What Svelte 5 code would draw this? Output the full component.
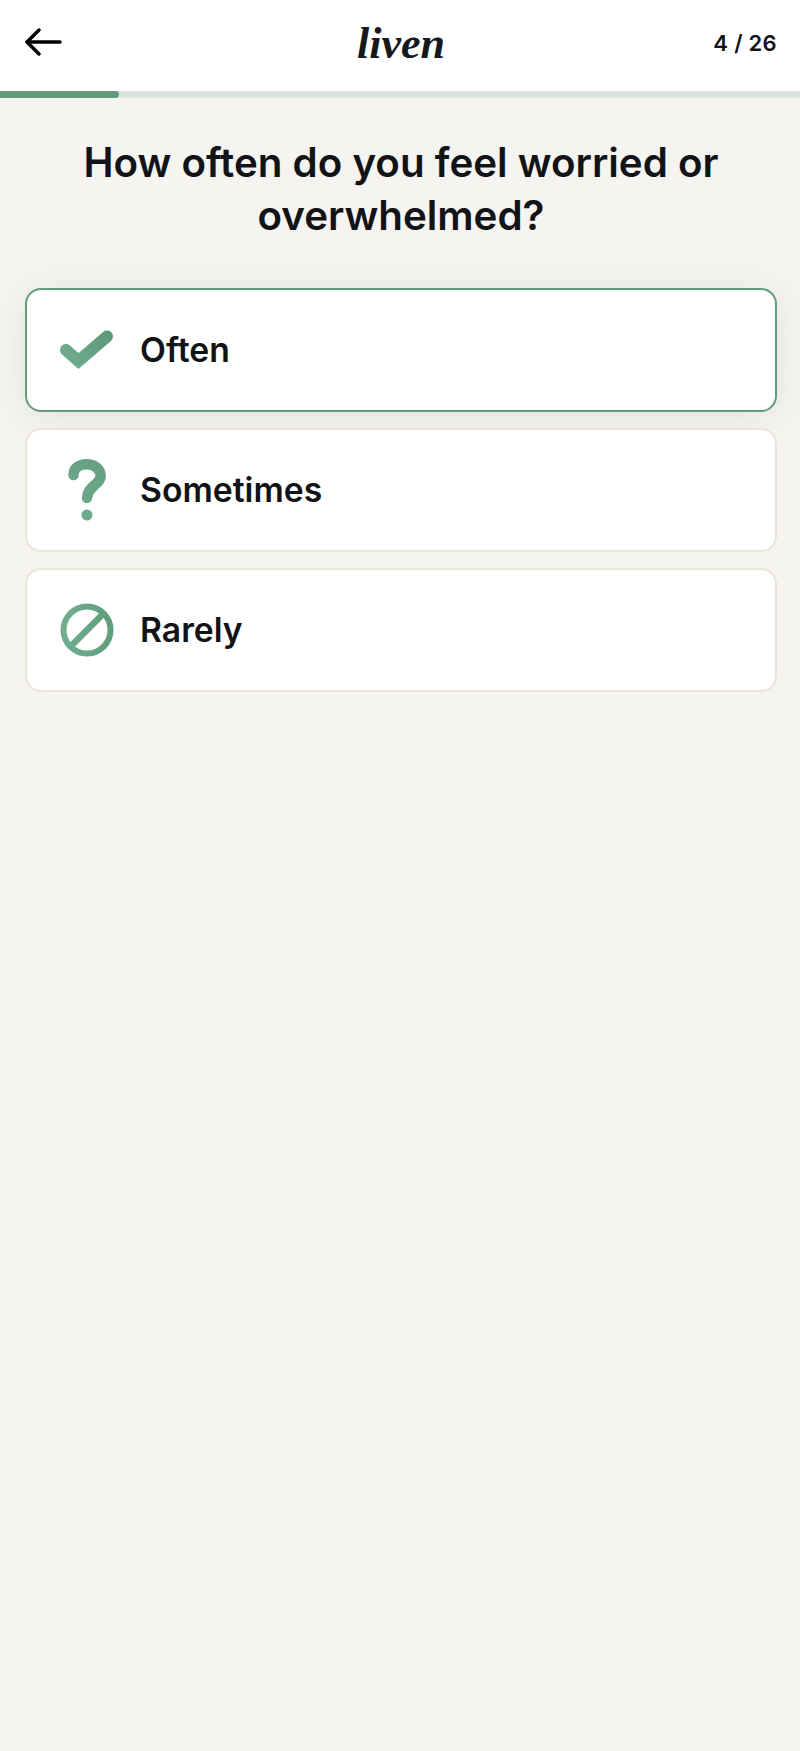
<script>
	const options = [
		{ id: 'often', label: 'Often', selected: true },
		{ id: 'sometimes', label: 'Sometimes', selected: false },
		{ id: 'rarely', label: 'Rarely', selected: false }
	];
	const progress = 14.9;
</script>

<div class="page">
	<header class="topbar">
		<svg class="back" width="37" height="28" viewBox="0 0 37 28" fill="none" stroke="#000" stroke-width="3.400" stroke-linecap="round" stroke-linejoin="round">
			<path d="M2 14H35" />
			<path d="M14 2L2 14L14 26" />
		</svg>
		<span class="logo">liven</span>
		<span class="count">4 / 26</span>
	</header>

	<div class="track">
		<div class="fill" style="width: {progress}%"></div>
	</div>

	<main>
		<h1>How often do you feel worried or overwhelmed?</h1>

		<div class="options">
			{#each options as option}
				<div class="option {option.selected ? 'selected' : ''}">
					<span class="icon">
						{#if option.id === 'often'}
							<svg width="54" height="54" viewBox="0 0 54 54" fill="none">
								<defs>
									<linearGradient id="green-check" gradientUnits="userSpaceOnUse" x1="6" y1="45" x2="48" y2="10">
										<stop offset="0" stop-color="#72ad91" />
										<stop offset="1" stop-color="#5b9a77" />
									</linearGradient>
								</defs>
								<path d="M6 27L18.500 38L47 13.500" stroke="url(#green-check)" stroke-width="12" stroke-linecap="round" stroke-linejoin="miter" />
							</svg>
						{:else if option.id === 'sometimes'}
							<svg width="54" height="62" viewBox="0 0 54 62" fill="none">
								<defs>
									<linearGradient id="green-question" gradientUnits="userSpaceOnUse" x1="10" y1="60" x2="44" y2="2">
										<stop offset="0" stop-color="#6dab8e" />
										<stop offset="1" stop-color="#649f80" />
									</linearGradient>
								</defs>
								<path d="M13.500 16C13.500 9 19 5.300 27 5.300C35 5.300 40.700 10.500 40.700 17C40.700 25 27.500 27 27 39" stroke="url(#green-question)" stroke-width="10.500" stroke-linecap="round" />
								<circle cx="27" cy="56" r="5.500" fill="#6dab8e" />
							</svg>
						{:else}
							<svg width="54" height="54" viewBox="0 0 54 54" fill="none">
								<defs>
									<linearGradient id="green-ring" gradientUnits="userSpaceOnUse" x1="2" y1="27" x2="52" y2="27">
										<stop offset="0" stop-color="#72ad91" />
										<stop offset="1" stop-color="#5f9d7b" />
									</linearGradient>
								</defs>
								<circle cx="27" cy="27" r="23.500" stroke="url(#green-ring)" stroke-width="6" />
								<path d="M10 44L44 10" stroke="url(#green-ring)" stroke-width="6.500" />
							</svg>
						{/if}
					</span>
					<span class="label">{option.label}</span>
				</div>
			{/each}
		</div>
	</main>
</div>

<style>
	:global(body) {
		background-color: #f5f4f0;
	}

	.page {
		min-height: 1751px;
		background-color: #f5f4f0;
		font-family: Inter, 'Liberation Sans', sans-serif;
		color: #111316;
	}

	.topbar {
		height: 91px;
		box-sizing: border-box;
		padding: 0 23px 0 25px;
		background-color: #fff;
		display: grid;
		grid-template-columns: 1fr auto 1fr;
		align-items: center;
	}

	.back {
		margin-bottom: 8px;
	}

	.logo {
		font-family: 'Liberation Serif', serif;
		font-style: italic;
		font-weight: 700;
		font-size: 44px;
		line-height: 1;
		color: #15191c;
		margin-bottom: 3px;
	}

	.count {
		justify-self: end;
		font-size: 22px;
		font-weight: 600;
		letter-spacing: 0.3px;
		margin-bottom: 5px;
	}

	.track {
		height: 7px;
		background-color: #d8e5df;
	}

	.fill {
		height: 100%;
		background-color: #609c79;
		border-radius: 0 4px 4px 0;
	}

	main {
		padding: 38px 23px 0 25px;
	}

	h1 {
		margin: 0 0 46px 0;
		font-size: 40.300px;
		font-weight: 600;
		line-height: 53px;
		text-align: center;
	}

	.options {
		display: flex;
		flex-direction: column;
		gap: 16px;
	}

	.option {
		height: 124px;
		box-sizing: border-box;
		padding: 0 0 0 33px;
		display: flex;
		align-items: center;
		gap: 26px;
		background-color: #fff;
		border: 2px solid #ebe5d9;
		border-radius: 16px;
	}

	.option.selected {
		border-color: #5f9d7b;
		box-shadow: 0 4px 36px rgba(0, 0, 0, 0.08);
	}

	.icon {
		width: 54px;
		display: flex;
		justify-content: center;
	}

	.label {
		font-size: 33.700px;
		font-weight: 600;
		padding-bottom: 2px;
	}
</style>
